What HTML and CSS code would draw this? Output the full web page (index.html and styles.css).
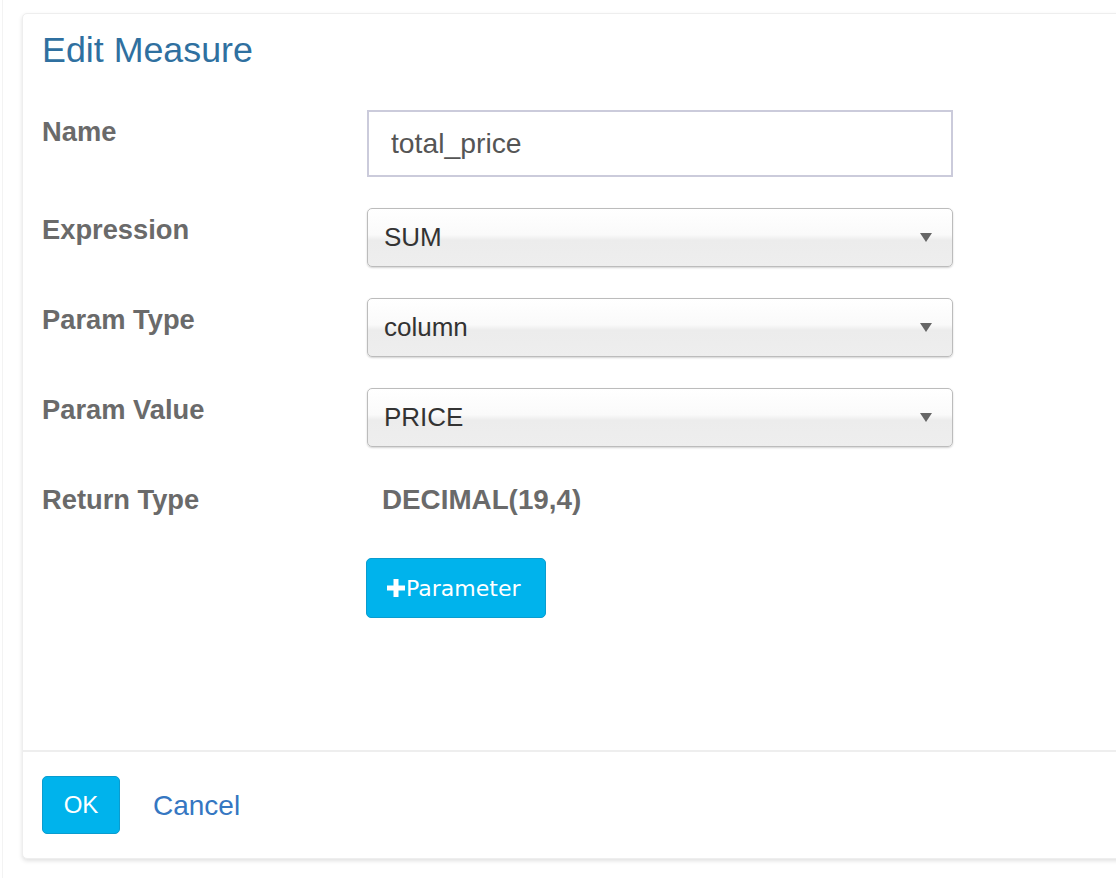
FILE: index.html
```html
<!DOCTYPE html>
<html>
<head>
<meta charset="utf-8">
<link rel="stylesheet" href="styles.css">
</head>
<body>
<div class="page">
  <div class="modal">
    <div class="modal-body">
      <h3 class="title">Edit Measure</h3>
      <div class="row">
        <label class="label">Name</label>
        <input class="text-input" type="text" value="total_price">
      </div>
      <div class="row">
        <label class="label">Expression</label>
        <div class="select"><span>SUM</span><svg class="caret" width="12" height="9" viewBox="0 0 12 9"><path d="M0 0H12L6 9Z" fill="#666"/></svg></div>
      </div>
      <div class="row">
        <label class="label">Param Type</label>
        <div class="select"><span>column</span><svg class="caret" width="12" height="9" viewBox="0 0 12 9"><path d="M0 0H12L6 9Z" fill="#666"/></svg></div>
      </div>
      <div class="row">
        <label class="label">Param Value</label>
        <div class="select"><span>PRICE</span><svg class="caret" width="12" height="9" viewBox="0 0 12 9"><path d="M0 0H12L6 9Z" fill="#666"/></svg></div>
      </div>
      <div class="row row-static">
        <label class="label">Return Type</label>
        <div class="static">DECIMAL(19,4)</div>
      </div>
      <div class="row row-btn">
        <span class="spacer"></span>
        <button class="btn btn-param"><svg class="plus" width="18" height="18" viewBox="0 0 18 18"><path d="M6.5 0H11.5V6.5H18V11.5H11.5V18H6.5V11.5H0V6.5H6.5Z" fill="#fff"/></svg>Parameter</button>
      </div>
    </div>
    <div class="modal-footer">
      <button class="btn btn-ok">OK</button>
      <a class="cancel" href="#">Cancel</a>
    </div>
  </div>
</div>
</body>
</html>
```
FILE: styles.css
```css
html, body {
  margin: 0;
  padding: 0;
  background: #fff;
}
body {
  font-family: "Liberation Sans", Arial, sans-serif;
  overflow: hidden;
}
.page {
  margin-left: 2px;
  border-left: 1px solid #f3f3f3;
  padding-left: 19px;
  padding-top: 13px;
  min-height: 878px;
  box-sizing: border-box;
  overflow: hidden;
}
.modal {
  margin-right: -20px;
  border: 1px solid #eeeeee;
  border-radius: 5px;
  box-shadow: 0 2px 4px rgba(0,0,0,0.12);
  background: #fff;
}
.modal-body {
  padding: 16px 19px 132px 19px;
}
.title {
  margin: 0 0 40px 0;
  font-size: 35.8px;
  line-height: 40px;
  font-weight: normal;
  color: #2f70a0;
}
.row {
  display: flex;
  align-items: flex-start;
  margin-bottom: 31px;
}
.label {
  width: 325px;
  flex: none;
  padding-top: 3px;
  font-size: 27.3px;
  line-height: 38px;
  font-weight: bold;
  color: #6a6a6a;
}
.text-input {
  width: 586px;
  height: 67px;
  box-sizing: border-box;
  border: 2px solid #cbcbdb;
  border-radius: 0;
  padding: 0 22px;
  margin: 0;
  font-family: "Liberation Sans", Arial, sans-serif;
  font-size: 28.3px;
  color: #555;
  background: #fff;
  outline: none;
}
.select {
  width: 586px;
  height: 59px;
  box-sizing: border-box;
  border: 1px solid #bcbcbc;
  border-radius: 5px;
  background: linear-gradient(to bottom, #ffffff 0%, #fafafa 45%, #ececec 55%, #eeeeee 100%);
  box-shadow: 0 1px 2px rgba(0,0,0,0.18);
  display: flex;
  align-items: center;
  justify-content: space-between;
  padding: 0 20px 0 16px;
  font-size: 26px;
  color: #333;
}
.caret {
  display: block;
  flex: none;
}
.row-static {
  min-height: 49px;
}
.static {
  padding-top: 3px;
  padding-left: 15px;
  font-size: 27.8px;
  line-height: 38px;
  font-weight: bold;
  color: #6a6a6a;
}
.row-btn {
  margin-bottom: 0;
}
.spacer {
  width: 324px;
  flex: none;
}
.btn {
  box-sizing: border-box;
  border: 1px solid #0a9ccf;
  border-radius: 5px;
  background: #00b3ec;
  color: #fff;
  cursor: pointer;
  margin: 0;
}
.btn-param {
  width: 180px;
  height: 60px;
  display: flex;
  align-items: center;
  padding: 0 0 0 20px;
  font-family: "DejaVu Sans", Verdana, sans-serif;
  font-size: 22px;
}
.plus {
  display: block;
  margin-right: 1px;
  flex: none;
}
.modal-footer {
  border-top: 2px solid #eeeeee;
  padding: 24px 19px 24px 19px;
  display: flex;
  align-items: center;
  gap: 33px;
}
.btn-ok {
  width: 78px;
  height: 58px;
  font-family: "Liberation Sans", Arial, sans-serif;
  font-size: 24px;
  padding: 0;
}
.cancel {
  font-size: 28px;
  color: #3577c2;
  text-decoration: none;
  padding-top: 2px;
}
```
